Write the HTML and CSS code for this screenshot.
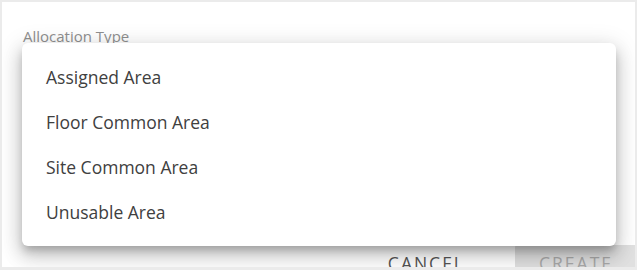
FILE: index.html
```html
<!DOCTYPE html>
<html>
<head>
<meta charset="utf-8">
<link rel="stylesheet" href="styles.css">
</head>
<body>
<div class="dialog">
  <div class="field-label">Allocation Type</div>
  <div class="footer">
    <button class="btn btn-text">CANCEL</button>
    <button class="btn btn-create" disabled>CREATE</button>
  </div>
  <ul class="menu">
    <li class="menu-item">Assigned Area</li>
    <li class="menu-item">Floor Common Area</li>
    <li class="menu-item">Site Common Area</li>
    <li class="menu-item">Unusable Area</li>
  </ul>
</div>
</body>
</html>
```
FILE: styles.css
```css
html, body {
  margin: 0;
  padding: 0;
  background: #ebebeb;
  font-family: "Open Sans", "Liberation Sans", sans-serif;
}
body {
  padding: 2px;
  width: 633px;
  height: 265px;
}
.dialog {
  position: relative;
  background: #fff;
  width: 633px;
  height: 265px;
  overflow: hidden;
  display: flex;
  flex-direction: column;
}
.field-label {
  margin: 24px 0 0 21px;
  font-size: 15px;
  line-height: 20px;
  color: #8f8f8f;
}
.footer {
  margin-top: 199px;
  display: flex;
  justify-content: flex-end;
  gap: 26px;
}
.btn {
  font-family: inherit;
  font-size: 17.5px;
  letter-spacing: 2px;
  height: 36px;
  border: none;
  border-radius: 2px;
  padding: 0 24px;
  background: transparent;
  color: #555;
  flex: none;
}
.btn-create {
  background: #e0e0e0;
  color: #a9a9a9;
  margin-right: -2px;
}
.menu {
  position: absolute;
  left: 20px;
  top: 41px;
  width: 594px;
  margin: 0;
  padding: 11.5px 0;
  list-style: none;
  background: #fff;
  border-radius: 6px;
  box-shadow: 0 6px 8px -2px rgba(0,0,0,0.22), 0 10px 18px 2px rgba(0,0,0,0.14), 0 4px 22px 4px rgba(0,0,0,0.10);
}
.menu-item {
  height: 45px;
  line-height: 45px;
  padding-left: 24px;
  font-size: 17.5px;
  color: #404040;
}
```
